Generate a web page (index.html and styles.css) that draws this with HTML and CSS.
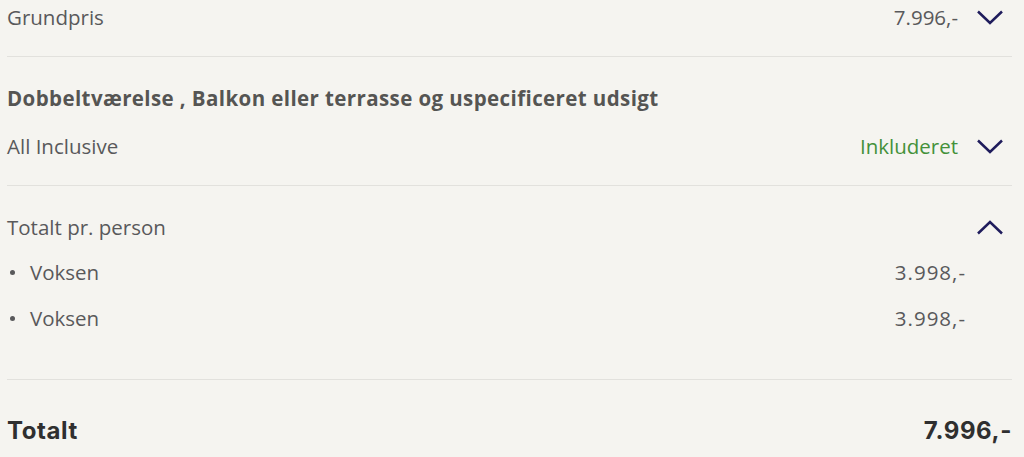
FILE: index.html
```html
<!DOCTYPE html>
<html lang="da">

<head>
    <meta charset="UTF-8">
    <meta name="viewport" content="width=device-width, initial-scale=1.0">
    <title>Prisoversigt</title>
    <link rel="stylesheet" href="styles.css">
</head>

<body>
<div class="summary">
    <div class="section section-first">
        <div class="row">
            <span class="label">Grundpris</span>
            <span class="value">7.996,-</span>
            <button type="button" class="toggle" aria-label="Vis detaljer">
                <svg width="26" height="15" viewBox="0 0 26 15"><path d="M1 1.5 L13 13 L25 1.5" /></svg>
            </button>
        </div>
    </div>

    <div class="section">
        <h3 class="room">Dobbeltværelse , Balkon eller terrasse og uspecificeret udsigt</h3>
        <div class="row">
            <span class="label">All Inclusive</span>
            <span class="value included">Inkluderet</span>
            <button type="button" class="toggle" aria-label="Vis detaljer">
                <svg width="26" height="15" viewBox="0 0 26 15"><path d="M1 1.5 L13 13 L25 1.5" /></svg>
            </button>
        </div>
    </div>

    <div class="section section-persons">
        <div class="row">
            <span class="label">Totalt pr. person</span>
            <button type="button" class="toggle" aria-label="Skjul detaljer">
                <svg width="26" height="15" viewBox="0 0 26 15"><path d="M1 13.5 L13 2 L25 13.5" /></svg>
            </button>
        </div>
        <ul class="persons">
            <li><span class="label">Voksen</span><span class="value">3.998,-</span></li>
            <li><span class="label">Voksen</span><span class="value">3.998,-</span></li>
        </ul>
    </div>

    <div class="total">
        <span>Totalt</span>
        <span>7.996,-</span>
    </div>
</div>
</body>

</html>
```

FILE: styles.css
```css
/* Prisoversigt */
body {
    font-family: "Open Sans", "Lato", sans-serif;
    background-color: #f5f4f0;
    color: #59595b;
    margin: 0;
    padding: 0;
}

.summary {
    padding: 0 12px 0 7px;
}

.section {
    padding: 24px 0 22px;
    border-bottom: 1px solid #e2e1dd;
}

.section-first {
    padding-top: 0;
}

.row {
    display: flex;
    align-items: center;
    height: 34px;
    font-size: 20.5px;
}

.row .label {
    flex: 1;
}

.value {
    font-size: 20.5px;
}

.included {
    color: #44913a;
}

.toggle {
    display: flex;
    align-items: center;
    justify-content: center;
    width: 26px;
    height: 34px;
    margin: 0 9px 0 19px;
    padding: 0;
    border: none;
    background: none;
    cursor: pointer;
}

.toggle path {
    fill: none;
    stroke: #1f1c5c;
    stroke-width: 2.5;
}

.room {
    display: flex;
    align-items: center;
    height: 34px;
    margin: 0 0 14px;
    font-size: 20.5px;
    font-weight: 700;
    letter-spacing: 0.4px;
    color: #555553;
}

.section-persons {
    padding-bottom: 44px;
}

.persons {
    list-style: none;
    margin: 11px 0 0;
    padding: 0;
}

.persons li {
    display: flex;
    align-items: center;
    height: 34px;
    margin-bottom: 12px;
    font-size: 20.5px;
}

.persons li:last-child {
    margin-bottom: 0;
}

.persons li::before {
    content: "";
    width: 5px;
    height: 5px;
    margin: 0 15px 0 3px;
    border-radius: 50%;
    background-color: #59595b;
}

.persons .label {
    flex: 1;
}

.persons .value {
    margin-right: 46px;
    letter-spacing: 1px;
}

.total {
    display: flex;
    justify-content: space-between;
    align-items: center;
    height: 40px;
    padding-top: 30px;
    font-family: "Inter", sans-serif;
    font-size: 24px;
    font-weight: 700;
    letter-spacing: 0.6px;
    color: #2f2f2f;
}
```
